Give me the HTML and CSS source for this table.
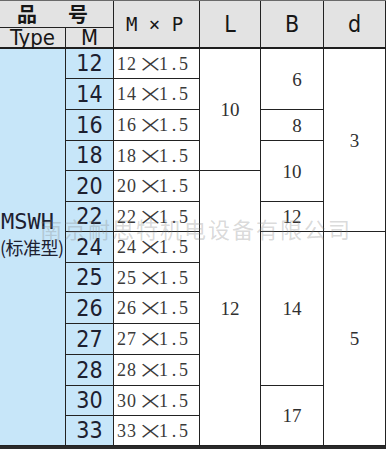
FILE: index.html
```html
<!DOCTYPE html>
<html>
<head>
<meta charset="utf-8">
<link rel="stylesheet" href="styles.css">
</head>
<body>
<div class="sheet">
  <div class="grid">
    <div class="cell hd c1 cs2 hname"><span>品</span><span>号</span></div>
    <div class="cell hd c3 rs2 hend mono">M × P</div>
    <div class="cell hd c4 rs2 hend cond">L</div>
    <div class="cell hd c5 rs2 hend cond">B</div>
    <div class="cell hd c6 rs2 hend cond">d</div>

    <div class="cell hd c1 hend cond small">Type</div>
    <div class="cell hd c2 hend cond small">M</div>

    <div class="cell blue c1 rs13 type"><span class="tname">MSWH</span><span class="tsub">(标准型)</span></div>
    <div class="cell blue c2 num">12</div>
    <div class="cell c3 mp">12<span class="x">×</span>1<span class="dot">.</span>5</div>
    <div class="cell c4 rs4 val">10</div>
    <div class="cell c5 rs2 val one">6</div>
    <div class="cell c6 rs6 val">3</div>

    <div class="cell blue c2 num">14</div>
    <div class="cell c3 mp">14<span class="x">×</span>1<span class="dot">.</span>5</div>

    <div class="cell blue c2 num">16</div>
    <div class="cell c3 mp">16<span class="x">×</span>1<span class="dot">.</span>5</div>
    <div class="cell c5 val one">8</div>

    <div class="cell blue c2 num">18</div>
    <div class="cell c3 mp">18<span class="x">×</span>1<span class="dot">.</span>5</div>
    <div class="cell c5 rs2 val">10</div>

    <div class="cell blue c2 num">20</div>
    <div class="cell c3 mp">20<span class="x">×</span>1<span class="dot">.</span>5</div>
    <div class="cell c4 rs9 val">12</div>

    <div class="cell blue c2 num">22</div>
    <div class="cell c3 mp">22<span class="x">×</span>1<span class="dot">.</span>5</div>
    <div class="cell c5 val">12</div>

    <div class="cell blue c2 num">24</div>
    <div class="cell c3 mp">24<span class="x">×</span>1<span class="dot">.</span>5</div>
    <div class="cell c5 rs5 val">14</div>
    <div class="cell c6 rs7 val">5</div>

    <div class="cell blue c2 num">25</div>
    <div class="cell c3 mp">25<span class="x">×</span>1<span class="dot">.</span>5</div>

    <div class="cell blue c2 num">26</div>
    <div class="cell c3 mp">26<span class="x">×</span>1<span class="dot">.</span>5</div>

    <div class="cell blue c2 num">27</div>
    <div class="cell c3 mp">27<span class="x">×</span>1<span class="dot">.</span>5</div>

    <div class="cell blue c2 num">28</div>
    <div class="cell c3 mp">28<span class="x">×</span>1<span class="dot">.</span>5</div>

    <div class="cell blue c2 num">30</div>
    <div class="cell c3 mp">30<span class="x">×</span>1<span class="dot">.</span>5</div>
    <div class="cell c5 rs2 val">17</div>

    <div class="cell blue c2 num">33</div>
    <div class="cell c3 mp">33<span class="x">×</span>1<span class="dot">.</span>5</div>
  </div>
  <div class="wm">南京耐思特机电设备有限公司</div>
</div>
</body>
</html>
```
FILE: styles.css
```css
html, body {
  margin: 0;
  padding: 0;
  background: #ffffff;
}

.sheet {
  position: relative;
  width: 386px;
  height: 449px;
  overflow: hidden;
}

.grid {
  display: grid;
  grid-template-columns: 66px 48px 86px 61px 63px 62px;
  grid-template-rows: 27px 21px 30px 31px 31px 30px 31px 30px 31px 30px 31px 31px 31px 30px 30px;
  border-top: 1px solid #6a6a6a;
  border-bottom: 3px solid #2a2a2a;
  width: 386px;
  box-sizing: content-box;
}

.cell {
  box-sizing: border-box;
  border-right: 1px solid #222;
  border-bottom: 1px solid #222;
  display: flex;
  align-items: center;
  justify-content: center;
  background: #ffffff;
  color: #2e2e2e;
  white-space: nowrap;
}

.c1 { grid-column: 1; }
.c2 { grid-column: 2; }
.c3 { grid-column: 3; }
.c4 { grid-column: 4; }
.c5 { grid-column: 5; }
.c6 { grid-column: 6; }
.cs2 { grid-column: 1 / span 2; }

.rs2 { grid-row: span 2; }
.rs4 { grid-row: span 4; }
.rs5 { grid-row: span 5; }
.rs6 { grid-row: span 6; }
.rs7 { grid-row: span 7; }
.rs9 { grid-row: span 9; }
.rs13 { grid-row: span 13; }

.hd {
  background: #e3e3e3;
  color: #161616;
}

.hend {
  border-bottom: 2px solid #1e1e1e;
}

.hname {
  justify-content: flex-start;
  padding-left: 17px;
  gap: 31px;
  font-family: "Noto Sans CJK SC", sans-serif;
  font-weight: 700;
  font-size: 20px;
  line-height: 20px;
}

.cond {
  font-family: "Liberation Sans Narrow", "DejaVu Sans Condensed", "Liberation Sans", sans-serif;
  font-size: 23px;
  line-height: 1;
}

.cond.small {
  font-size: 22px;
  line-height: 18px;
  padding-top: 1px;
}

.mono {
  font-family: "DejaVu Sans Mono", monospace;
  font-size: 19px;
  line-height: 1;
  padding-right: 4px;
}

.blue {
  background: #c7e6f9;
  color: #1c2030;
}

.num {
  font-family: "Liberation Sans Narrow", "DejaVu Sans Condensed", "Liberation Sans", sans-serif;
  font-size: 23px;
  line-height: 1;
}

.type {
  flex-direction: column;
  align-items: flex-start;
  padding-bottom: 28px;
  gap: 5px;
}

.tname {
  font-family: "DejaVu Sans Mono", monospace;
  font-size: 22px;
  line-height: 1;
  padding-left: 1px;
}

.tsub {
  font-family: "Noto Sans CJK SC", sans-serif;
  font-size: 18px;
  line-height: 1;
  letter-spacing: -0.5px;
}

.mp {
  justify-content: flex-start;
  padding-left: 3px;
  font-family: "Liberation Serif", serif;
  font-size: 18px;
  letter-spacing: 1px;
  color: #3a3a3a;
  line-height: 1;
}

.mp .x {
  display: inline-block;
  width: 22px;
  text-align: center;
  font-family: "DejaVu Sans", sans-serif;
  font-weight: 200;
  font-size: 32px;
  line-height: 18px;
  letter-spacing: 0;
  transform: scaleY(0.75);
}

.mp .dot {
  display: inline-block;
  width: 10px;
  text-align: center;
  letter-spacing: 0;
}

.val {
  font-family: "Liberation Serif", serif;
  font-size: 19px;
  line-height: 1;
  color: #303030;
}

.one {
  padding-left: 10px;
}

.wm {
  position: absolute;
  left: 40px;
  top: 216px;
  font-family: "Noto Sans CJK SC", sans-serif;
  font-size: 22px;
  line-height: 24px;
  letter-spacing: 2px;
  color: rgba(130, 130, 130, 0.3);
  white-space: nowrap;
  pointer-events: none;
}
```
